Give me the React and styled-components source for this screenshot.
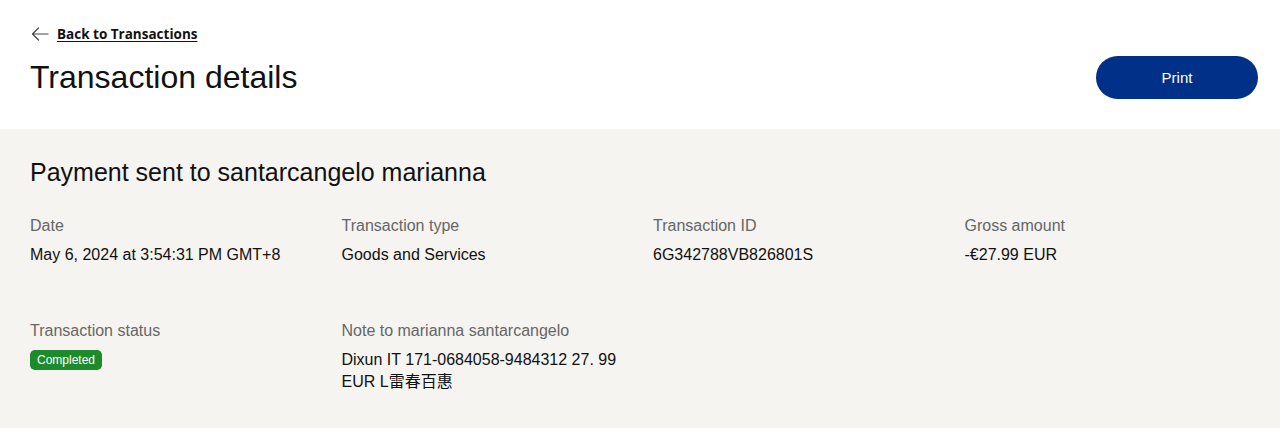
import styled, { createGlobalStyle } from "styled-components";

const GlobalStyle = createGlobalStyle`
  * { box-sizing: border-box; }
  body {
    margin: 0;
    background: #ffffff;
    font-family: "Liberation Sans", Arial, "Noto Sans CJK SC", sans-serif;
    color: #111111;
  }
`;

const details = [
  [
    { label: "Date", value: "May 6, 2024 at 3:54:31 PM GMT+8" },
    { label: "Transaction type", value: "Goods and Services" },
    { label: "Transaction ID", value: "6G342788VB826801S" },
    { label: "Gross amount", value: "-€27.99 EUR" },
  ],
];

const BackArrow = () => (
  <svg width="18" height="14" viewBox="0 0 18 14" fill="none">
    <path
      d="M17 7H1.5M7.5 1L1.5 7L7.5 13"
      stroke="#444"
      strokeWidth="1.2"
      strokeLinecap="round"
      strokeLinejoin="round"
    />
  </svg>
);

const App = () => {
  return (
    <>
      <GlobalStyle />
      <Header>
        <BackLink href="#">
          <BackArrow />
          <span>Back to Transactions</span>
        </BackLink>
        <TitleRow>
          <PageTitle>Transaction details</PageTitle>
          <PrintButton type="button">Print</PrintButton>
        </TitleRow>
      </Header>
      <Panel>
        <PanelHeading>Payment sent to santarcangelo marianna</PanelHeading>
        {details.map((row, i) => (
          <DetailGrid key={i}>
            {row.map((item) => (
              <Field key={item.label}>
                <Label>{item.label}</Label>
                <Value>{item.value}</Value>
              </Field>
            ))}
          </DetailGrid>
        ))}
        <DetailGrid $spaced>
          <Field>
            <Label>Transaction status</Label>
            <Badge>Completed</Badge>
          </Field>
          <Field>
            <Label>Note to marianna santarcangelo</Label>
            <Value>
              Dixun IT 171-0684058-9484312 27. 99
              <br />
              EUR L雷春百惠
            </Value>
          </Field>
        </DetailGrid>
      </Panel>
    </>
  );
};

export default App;

const Header = styled.header`
  padding: 24px 22px 30px 30px;
  background: #ffffff;
`;

const BackLink = styled.a`
  display: inline-flex;
  align-items: center;
  gap: 8px;
  height: 20px;
  margin-left: 1px;
  color: #111111;
  text-decoration: none;

  span {
    font-family: "Open Sans", sans-serif;
    font-weight: 700;
    font-size: 13.5px;
    text-decoration: underline;
    text-underline-offset: 2px;
  }
`;

const TitleRow = styled.div`
  display: flex;
  align-items: center;
  justify-content: space-between;
  margin-top: 11px;
`;

const PageTitle = styled.h1`
  margin: 0 0 2px;
  font-size: 32px;
  font-weight: 400;
  line-height: 40px;
  color: #111111;
`;

const PrintButton = styled.button`
  width: 162px;
  height: 43px;
  border: none;
  border-radius: 22px;
  background: #003087;
  color: #ffffff;
  font-family: "Liberation Sans", Arial, sans-serif;
  font-size: 15px;
  cursor: pointer;
`;

const Panel = styled.section`
  background: #f5f4f1;
  padding: 27px 4px 35px 30px;
`;

const PanelHeading = styled.h2`
  margin: 0 0 26px;
  font-size: 25px;
  font-weight: 400;
  line-height: 32px;
  color: #111111;
`;

const DetailGrid = styled.div`
  display: grid;
  grid-template-columns: repeat(4, 1fr);
  margin-top: ${(props) => (props.$spaced ? "53px" : "0")};
`;

const Field = styled.div`
  display: flex;
  flex-direction: column;
  align-items: flex-start;
`;

const Label = styled.div`
  font-size: 16px;
  line-height: 24px;
  color: #666666;
`;

const Value = styled.div`
  margin-top: 6px;
  font-size: 16px;
  line-height: 22px;
  color: #111111;
`;

const Badge = styled.span`
  margin-top: 7px;
  height: 20px;
  padding: 0 7px;
  border-radius: 5px;
  background: #1d8a2b;
  color: #ffffff;
  font-size: 12px;
  line-height: 20px;
`;
